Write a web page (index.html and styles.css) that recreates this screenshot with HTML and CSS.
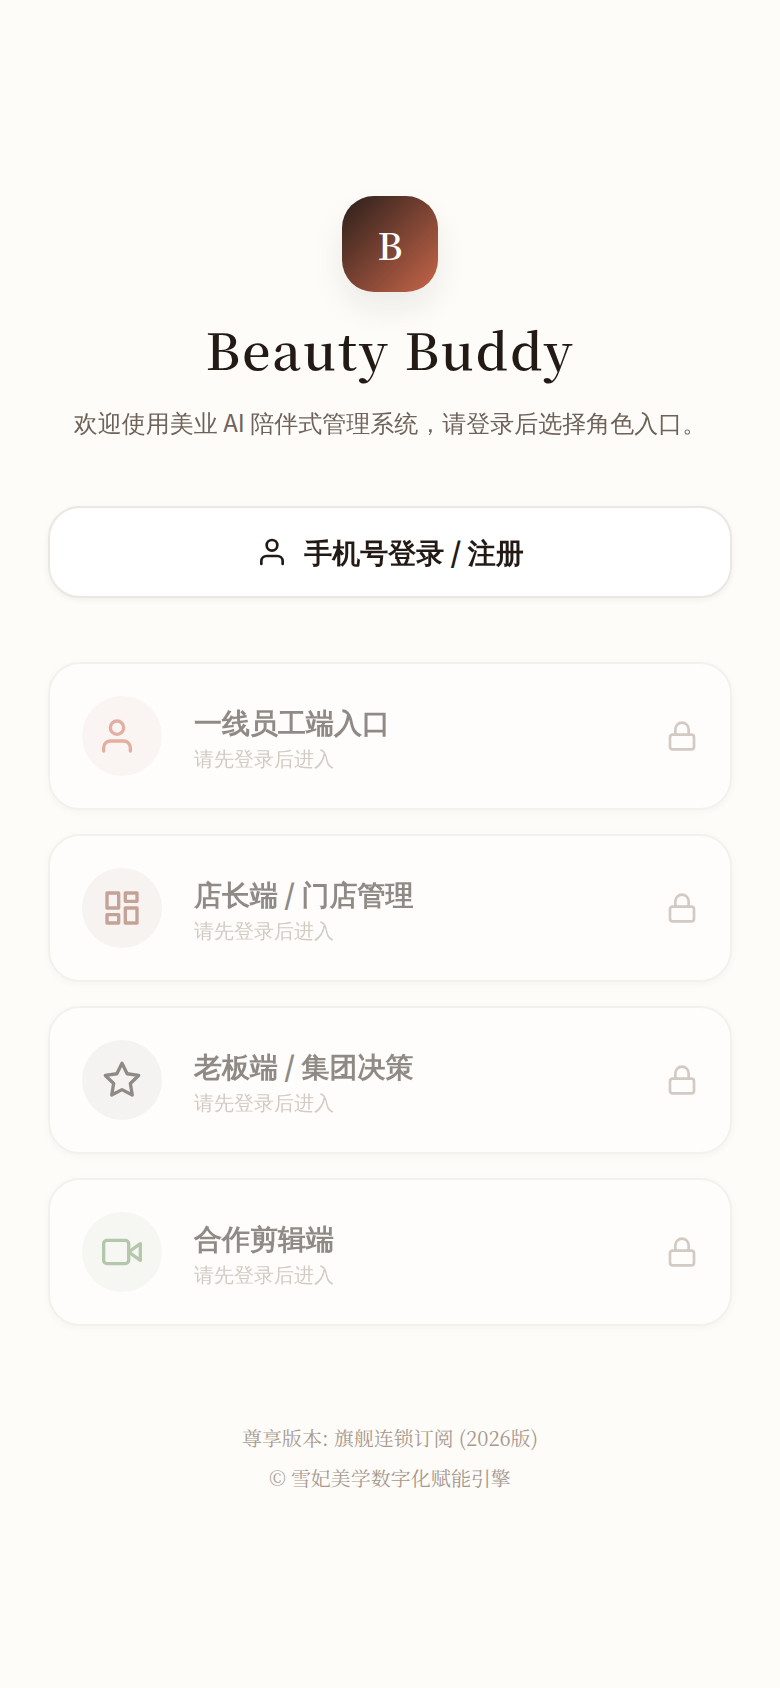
FILE: index.html
```html
<!DOCTYPE html>
<html lang="zh-CN">
<head>
    <meta charset="UTF-8">
    <meta name="viewport" content="width=device-width, initial-scale=1.0">
    <title>Beauty Buddy</title>
    <link rel="stylesheet" href="styles.css">
</head>
<body>
    <main class="page">
        <header class="intro">
            <div class="logo">B</div>
            <h1>Beauty Buddy</h1>
            <p>欢迎使用美业<span class="latin"> AI </span>陪伴式管理系统，请登录后选择角色入口。</p>
        </header>

        <button class="login" type="button">
            <svg class="icon" viewBox="0 0 24 24"><path d="M20 21v-2a4 4 0 0 0-4-4H8a4 4 0 0 0-4 4v2"/><circle cx="12" cy="7" r="4"/></svg>
            <span class="label">手机号登录<span class="latin"> / </span>注册</span>
        </button>

        <div class="roles">
            <button class="role" type="button" disabled>
                <span class="badge staff">
                    <svg class="icon" viewBox="0 0 24 24"><path d="M17 21v-2a4 4 0 0 0-4-4H5a4 4 0 0 0-4 4v2"/><circle cx="9" cy="7" r="4"/></svg>
                </span>
                <span class="text">
                    <span class="name">一线员工端入口</span>
                    <span class="hint">请先登录后进入</span>
                </span>
                <svg class="icon lock" viewBox="0 0 24 24"><rect x="3" y="11" width="18" height="11" rx="2"/><path d="M7 11V7a5 5 0 0 1 10 0v4"/></svg>
            </button>

            <button class="role" type="button" disabled>
                <span class="badge manager">
                    <svg class="icon" viewBox="0 0 24 24"><rect x="3" y="3" width="7" height="9"/><rect x="14" y="3" width="7" height="5"/><rect x="14" y="12" width="7" height="9"/><rect x="3" y="16" width="7" height="5"/></svg>
                </span>
                <span class="text">
                    <span class="name">店长端<span class="latin"> / </span>门店管理</span>
                    <span class="hint">请先登录后进入</span>
                </span>
                <svg class="icon lock" viewBox="0 0 24 24"><rect x="3" y="11" width="18" height="11" rx="2"/><path d="M7 11V7a5 5 0 0 1 10 0v4"/></svg>
            </button>

            <button class="role" type="button" disabled>
                <span class="badge owner">
                    <svg class="icon" viewBox="0 0 24 24"><polygon points="12 2 15.09 8.26 22 9.27 17 14.14 18.18 21.02 12 17.77 5.82 21.02 7 14.14 2 9.27 8.91 8.26 12 2"/></svg>
                </span>
                <span class="text">
                    <span class="name">老板端<span class="latin"> / </span>集团决策</span>
                    <span class="hint">请先登录后进入</span>
                </span>
                <svg class="icon lock" viewBox="0 0 24 24"><rect x="3" y="11" width="18" height="11" rx="2"/><path d="M7 11V7a5 5 0 0 1 10 0v4"/></svg>
            </button>

            <button class="role" type="button" disabled>
                <span class="badge editor">
                    <svg class="icon" viewBox="0 0 24 24"><polygon points="23 7 16 12 23 17 23 7"/><rect x="1" y="5" width="15" height="14" rx="2"/></svg>
                </span>
                <span class="text">
                    <span class="name">合作剪辑端</span>
                    <span class="hint">请先登录后进入</span>
                </span>
                <svg class="icon lock" viewBox="0 0 24 24"><rect x="3" y="11" width="18" height="11" rx="2"/><path d="M7 11V7a5 5 0 0 1 10 0v4"/></svg>
            </button>
        </div>

        <footer>
            <p>尊享版本: 旗舰连锁订阅 (2026版)</p>
            <p>© 雪妃美学数字化赋能引擎</p>
        </footer>
    </main>
</body>
</html>
```
FILE: styles.css
```css
* {
    box-sizing: border-box;
}

body {
    margin: 0;
    background-color: #fdfcf8;
    color: #231a15;
    font-family: "WenQuanYi Zen Hei", "Noto Sans CJK SC", sans-serif;
}

h1, p {
    margin: 0;
}

button {
    font-family: inherit;
    color: inherit;
}

.page {
    min-height: 100vh;
    padding: 54px 48px 48px;
    display: flex;
    flex-direction: column;
    justify-content: center;
}

.intro {
    display: flex;
    flex-direction: column;
    align-items: center;
    text-align: center;
    margin-bottom: 62px;
}

.logo, h1, footer {
    font-family: "Noto Serif SC", "Noto Serif CJK SC", "Liberation Serif", "Noto Sans CJK SC", serif;
}

.logo {
    width: 96px;
    height: 96px;
    border-radius: 32px;
    display: flex;
    align-items: center;
    justify-content: center;
    margin-bottom: 20px;
    background: linear-gradient(135deg, #2a1f1a, #c8654a);
    box-shadow: 0 16px 32px rgba(35, 26, 21, 0.08);
    color: #ffffff;
    font-size: 36px;
    font-weight: 600;
}

h1 {
    font-size: 50px;
    line-height: 72px;
    font-weight: 600;
    letter-spacing: 2px;
    margin-bottom: 20px;
}

.intro p {
    font-size: 24px;
    line-height: 40px;
    color: #6f625b;
}

.latin {
    font-family: "Noto Sans CJK SC", sans-serif;
    line-height: 1;
    font-weight: 400;
    white-space: pre;
}

.label .latin, .name .latin {
    font-weight: 700;
}

.icon {
    width: 32px;
    height: 32px;
    flex-shrink: 0;
    fill: none;
    stroke: currentColor;
    stroke-width: 2;
    stroke-linecap: round;
    stroke-linejoin: round;
}

.login {
    display: flex;
    align-items: center;
    justify-content: center;
    gap: 16px;
    padding: 22px;
    border: 2px solid #ebe8e3;
    border-radius: 32px;
    background-color: #ffffff;
    box-shadow: 0 2px 6px rgba(35, 26, 21, 0.06);
    font-size: 28px;
    line-height: 40px;
    font-weight: 900;
    margin-bottom: 64px;
    cursor: pointer;
}

.label {
    padding-top: 4px;
}

.roles {
    display: flex;
    flex-direction: column;
    gap: 24px;
    margin-bottom: 92px;
}

.role {
    display: flex;
    align-items: center;
    gap: 32px;
    padding: 32px;
    border: 2px solid #ebe8e3;
    border-radius: 32px;
    background-color: #ffffff;
    box-shadow: 0 2px 6px rgba(35, 26, 21, 0.06);
    text-align: left;
    opacity: 0.5;
}

.badge {
    width: 80px;
    height: 80px;
    border-radius: 50%;
    display: flex;
    align-items: center;
    justify-content: center;
}

.badge .icon {
    width: 40px;
    height: 40px;
}

.staff {
    background-color: #f8f0ed;
    color: #c8654a;
}

.manager {
    background-color: #f0eceb;
    color: #8e4a3a;
}

.owner {
    background-color: #ececec;
    color: #231a15;
}

.editor {
    background-color: #f0f3ef;
    color: #6f935f;
}

.text {
    flex: 1;
    display: flex;
    flex-direction: column;
    padding-top: 8px;
}

.name {
    font-size: 28px;
    line-height: 40px;
    font-weight: 900;
}

.hint {
    font-size: 20px;
    line-height: 32px;
    color: #a8998f;
}

.lock {
    color: #a8998f;
}

footer {
    text-align: center;
    font-size: 20px;
    line-height: 40px;
    color: #a8998f;
}
```
